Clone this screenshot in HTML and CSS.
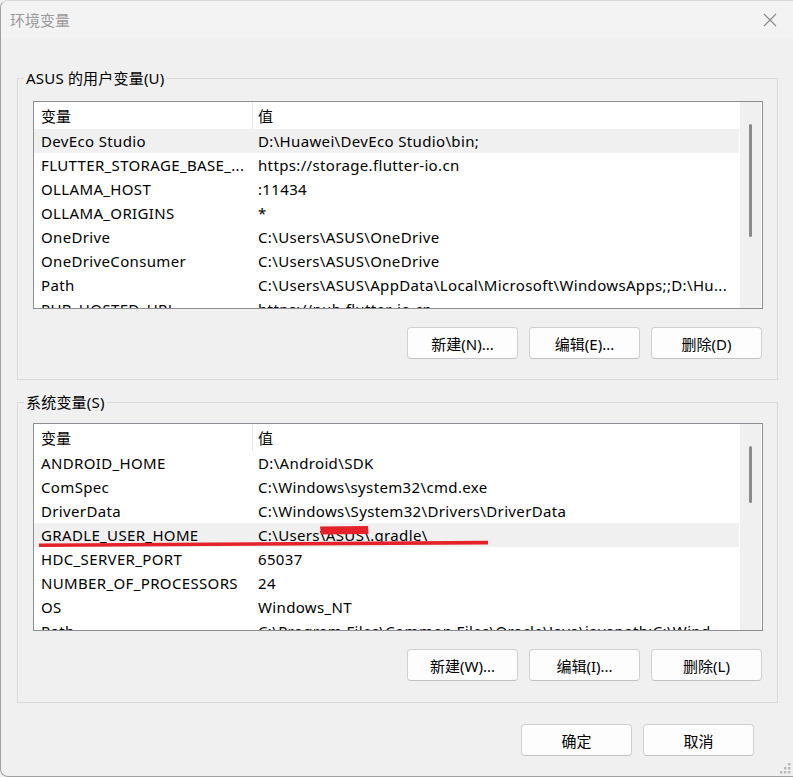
FILE: index.html
```html
<!DOCTYPE html>
<html lang="zh-CN">
<head>
<meta charset="utf-8">
<title>环境变量</title>
<link rel="stylesheet" href="styles.css">
</head>
<body>
<div class="dialog">
  <div class="titlebar">
    <span class="title">环境变量</span>
    <svg class="close" width="14" height="14" viewBox="0 0 14 14"><path d="M1 1L13 13M13 1L1 13" stroke="#8a8a8a" stroke-width="1.1" fill="none"/></svg>
  </div>

  <fieldset class="group group-user">
    <legend>ASUS 的用户变量(U)</legend>
    <div class="list">
      <div class="list-body">
        <div class="row head"><span class="c1">变量</span><span class="c2">值</span></div>
        <div class="row sel"><span class="c1">DevEco Studio</span><span class="c2">D:\Huawei\DevEco Studio\bin;</span></div>
        <div class="row"><span class="c1">FLUTTER_STORAGE_BASE_...</span><span class="c2">https://storage.flutter-io.cn</span></div>
        <div class="row"><span class="c1">OLLAMA_HOST</span><span class="c2">:11434</span></div>
        <div class="row"><span class="c1">OLLAMA_ORIGINS</span><span class="c2">*</span></div>
        <div class="row"><span class="c1">OneDrive</span><span class="c2">C:\Users\ASUS\OneDrive</span></div>
        <div class="row"><span class="c1">OneDriveConsumer</span><span class="c2">C:\Users\ASUS\OneDrive</span></div>
        <div class="row"><span class="c1">Path</span><span class="c2">C:\Users\ASUS\AppData\Local\Microsoft\WindowsApps;;D:\Hu...</span></div>
        <div class="row"><span class="c1">PUB_HOSTED_URL</span><span class="c2">https://pub.flutter-io.cn</span></div>
      </div>
      <div class="scrollbar"><div class="thumb thumb-user"></div></div>
    </div>
    <div class="buttons">
      <button class="btn">新建(N)...</button>
      <button class="btn">编辑(E)...</button>
      <button class="btn">删除(D)</button>
    </div>
  </fieldset>

  <fieldset class="group group-sys">
    <legend>系统变量(S)</legend>
    <div class="list">
      <div class="list-body">
        <div class="row head"><span class="c1">变量</span><span class="c2">值</span></div>
        <div class="row"><span class="c1">ANDROID_HOME</span><span class="c2">D:\Android\SDK</span></div>
        <div class="row"><span class="c1">ComSpec</span><span class="c2">C:\Windows\system32\cmd.exe</span></div>
        <div class="row"><span class="c1">DriverData</span><span class="c2">C:\Windows\System32\Drivers\DriverData</span></div>
        <div class="row sel"><span class="c1">GRADLE_USER_HOME</span><span class="c2">C:\Users\ASUS\.gradle\</span></div>
        <div class="row"><span class="c1">HDC_SERVER_PORT</span><span class="c2">65037</span></div>
        <div class="row"><span class="c1">NUMBER_OF_PROCESSORS</span><span class="c2">24</span></div>
        <div class="row"><span class="c1">OS</span><span class="c2">Windows_NT</span></div>
        <div class="row"><span class="c1">Path</span><span class="c2">C:\Program Files\Common Files\Oracle\Java\javapath;C:\Wind...</span></div>
      </div>
      <div class="scrollbar"><div class="thumb thumb-sys"></div></div>
    </div>
    <div class="buttons">
      <button class="btn">新建(W)...</button>
      <button class="btn">编辑(I)...</button>
      <button class="btn">删除(L)</button>
    </div>
  </fieldset>

  <div class="footer">
    <button class="btn">确定</button>
    <button class="btn">取消</button>
  </div>

  <!-- hand-drawn markup over the GRADLE_USER_HOME row -->
  <svg class="markup" width="793" height="777" viewBox="0 0 793 777">
    <path d="M320 526.5 L368 526 L368.5 534 L321 534.5 Z" fill="#e5222a"/>
    <path d="M39 545.2 L488 542.6" stroke="#e5222a" stroke-width="3.6" fill="none" stroke-linecap="butt"/>
  </svg>

  <svg class="grip" width="14" height="14" viewBox="0 0 14 14">
    <rect x="10" y="2" width="2.4" height="2.4" fill="#b8b8b8"/>
    <rect x="6" y="6" width="2.4" height="2.4" fill="#b8b8b8"/>
    <rect x="10" y="6" width="2.4" height="2.4" fill="#b8b8b8"/>
    <rect x="2" y="10" width="2.4" height="2.4" fill="#b8b8b8"/>
    <rect x="6" y="10" width="2.4" height="2.4" fill="#b8b8b8"/>
    <rect x="10" y="10" width="2.4" height="2.4" fill="#b8b8b8"/>
  </svg>
</div>
</body>
</html>
```

FILE: styles.css
```css
html, body {
  margin: 0;
  padding: 0;
  background: #f0f0f0;
}

body {
  font-family: "Noto Sans", "Noto Sans CJK SC", sans-serif;
  font-size: 15px;
  color: #000;
}

.dialog {
  position: relative;
  box-sizing: border-box;
  width: 793px;
  height: 777px;
  background: #f0f0f0;
  border: 1px solid #a0a0a0;
  border-right: none;
  border-top-color: #d6d6d6;
  border-radius: 8px 0 0 8px;
  overflow: hidden;
}

.titlebar {
  height: 37px;
  background: #f3f3f3;
  display: flex;
  align-items: center;
  justify-content: space-between;
  padding: 0 16px 0 9px;
}

.title {
  font-family: "Noto Sans CJK SC", sans-serif;
  font-size: 15px;
  color: #9a9a9a;
  line-height: 20px;
}

.close {
  display: block;
}

.group {
  margin: 0 15px 0 16px;
  padding: 0 14px 20px 15px;
  border: 1px solid #dadada;
  min-width: 0;
}

.group-user {
  margin-top: 30px;
}

.group-sys {
  margin-top: 12px;
  padding-bottom: 21px;
}

.group legend {
  font-family: "Noto Sans", "Noto Sans CJK SC", sans-serif;
  line-height: 20px;
  letter-spacing: 0.2px;
  padding: 0 2px;
  margin-left: -9px;
}

.group-user .list {
  margin-top: 13px;
}

.group-sys .list {
  margin-top: 11px;
}

.list {
  display: flex;
  height: 208px;
  box-sizing: border-box;
  border: 1px solid #8c8e94;
  background: #fff;
  overflow: hidden;
}

.list-body {
  flex: 1;
  overflow: hidden;
}

.row {
  display: flex;
  height: 24px;
  line-height: 24px;
  white-space: nowrap;
  letter-spacing: 0.35px;
}

.row.head {
  height: 27px;
  line-height: 27px;
  letter-spacing: 0;
}

.row.sel {
  background: #f0f0f0;
}

.c1 {
  width: 218px;
  flex: none;
  padding-left: 7px;
  box-sizing: border-box;
  overflow: hidden;
}

.c2 {
  padding-left: 6px;
}

.head .c1 {
  border-right: 1px solid #e5e5e5;
  width: 219px;
}

.head .c2 {
  padding-left: 5px;
}

.head span {
  font-family: "Noto Sans CJK SC", sans-serif;
}

.scrollbar {
  flex: none;
  width: 21px;
  background: #f0f0f0;
  border-left: 1px solid #fff;
  border-right: 1px solid #fff;
  display: flex;
  justify-content: center;
}

.thumb {
  width: 3px;
  margin-top: 22px;
  background: #8a8a8a;
  border-radius: 2px;
}

.thumb-user {
  height: 113px;
}

.thumb-sys {
  height: 57px;
}

.buttons {
  display: flex;
  justify-content: flex-end;
  gap: 11px;
  margin-top: 18px;
  padding-right: 1px;
}

.btn {
  width: 111px;
  height: 32px;
  box-sizing: border-box;
  background: #fdfdfd;
  border: 1px solid #d0d0d0;
  border-bottom-color: #c2c2c2;
  border-radius: 4px;
  font-family: "Noto Sans", "Noto Sans CJK SC", sans-serif;
  font-size: 15px;
  color: #000;
  padding: 0;
}

.footer {
  display: flex;
  justify-content: flex-end;
  gap: 11px;
  margin-top: 21px;
  padding-right: 39px;
}

.markup {
  position: absolute;
  left: -1px;
  top: -1px;
  pointer-events: none;
}

.grip {
  position: absolute;
  right: 1px;
  bottom: 1px;
}
```
